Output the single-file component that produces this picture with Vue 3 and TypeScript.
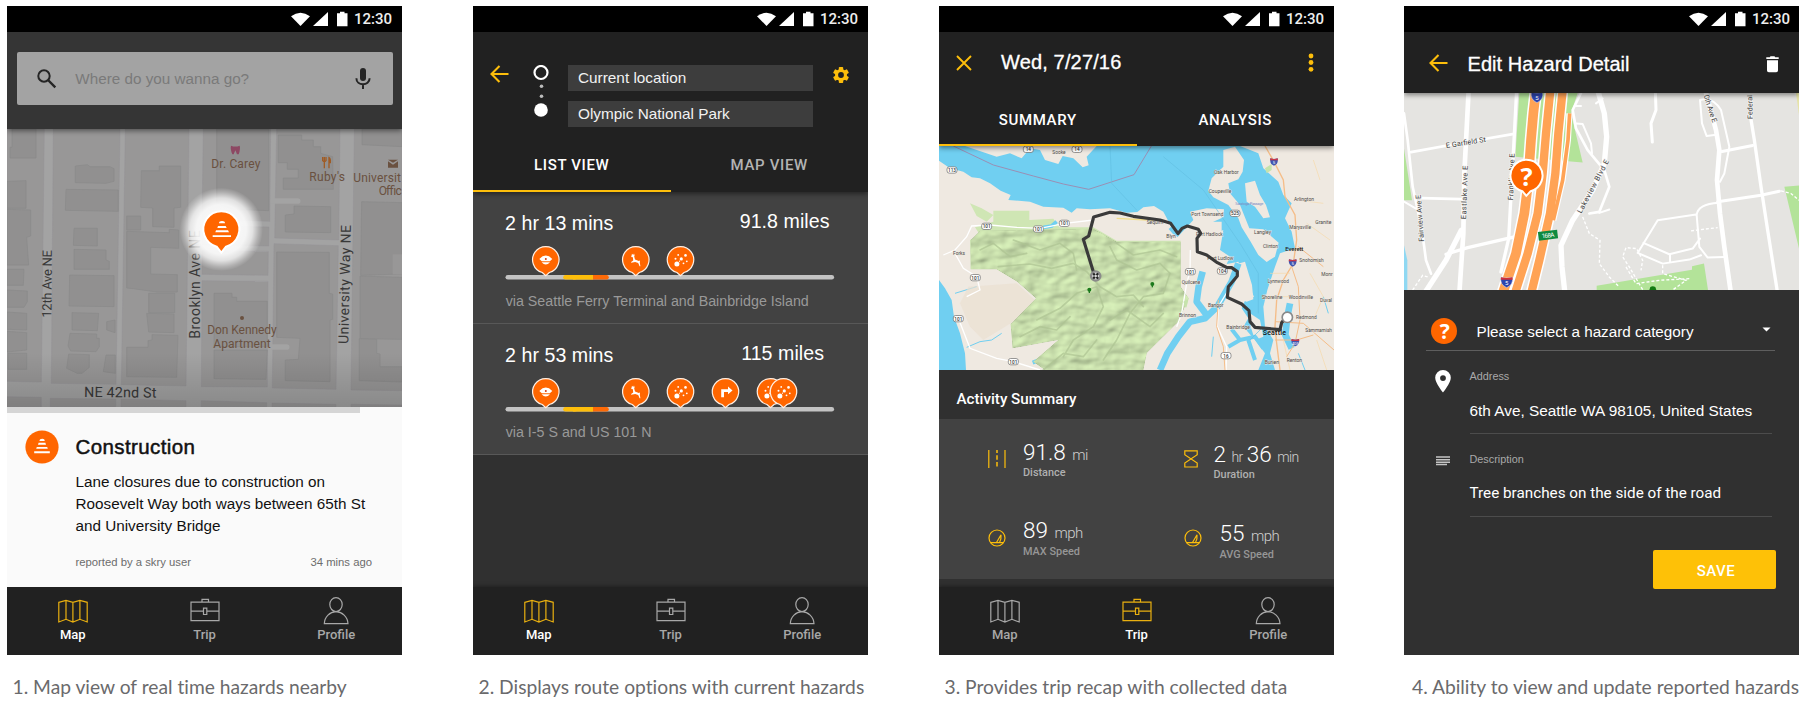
<script setup lang="ts">
type IconName = 'map' | 'trip' | 'profile'
type Hazard = 'police' | 'animal' | 'debris' | 'turn'

interface Screen {
  id: 'hazards' | 'routes' | 'recap' | 'edit'
  caption: string
  active?: IconName
}

interface Label {
  t: string
  x: number
  y: number
  w: number
  s?: number
  r?: number
}

const screens: Screen[] = [
  { id: 'hazards', caption: '1. Map view of real time hazards nearby', active: 'map' },
  { id: 'routes', caption: '2. Displays route options with current hazards', active: 'map' },
  { id: 'recap', caption: '3. Provides trip recap with collected data', active: 'trip' },
  { id: 'edit', caption: '4. Ability to view and update reported hazards' },
]

const navItems: { id: IconName; label: string }[] = [
  { id: 'map', label: 'Map' },
  { id: 'trip', label: 'Trip' },
  { id: 'profile', label: 'Profile' },
]

const routes: { time: string; miles: string; inset: number; via: string; pins: { x: number; kind: Hazard }[] }[] = [
  {
    time: '2 hr 13 mins',
    miles: '91.8 miles',
    inset: 38.5,
    via: 'via Seattle Ferry Terminal and Bainbridge Island',
    pins: [
      { x: 40.8, kind: 'police' },
      { x: 130.8, kind: 'animal' },
      { x: 175.5, kind: 'debris' },
    ],
  },
  {
    time: '2 hr 53 mins',
    miles: '115 miles',
    inset: 44,
    via: 'via I-5 S and US 101 N',
    pins: [
      { x: 40.8, kind: 'police' },
      { x: 130.8, kind: 'animal' },
      { x: 175.5, kind: 'debris' },
      { x: 220.5, kind: 'turn' },
      { x: 265.5, kind: 'debris' },
      { x: 278.5, kind: 'debris' },
    ],
  },
]

const stats: { icon: string; parts: string[]; label: string; cls: string }[] = [
  { icon: 'road', parts: ['91.8', 'mi'], label: 'Distance', cls: 's1' },
  { icon: 'glass', parts: ['2', 'hr', '36', 'min'], label: 'Duration', cls: 's2' },
  { icon: 'gauge', parts: ['89', 'mph'], label: 'MAX Speed', cls: 's3' },
  { icon: 'gauge', parts: ['55', 'mph'], label: 'AVG Speed', cls: 's4' },
]

const blocks: string[] = [
  '21,387 133,387 124,1146 21,1144',
  '160,387 360,387 348,1153 154,1150',
  '376,387 567,387 558,1158 364,1154',
  '610,387 812,387 809,664 606,658',
  '606,678 807,681 806,738 606,735',
  '606,752 805,754 804,826 606,823',
  '606,842 804,844 802,1161 604,1160',
  '830,387 1020,387 1016,720 824,714',
  '822,731 1015,737 1008,1168 817,1164',
  '1063,387 1206,387 1206,1172 1053,1170',
  '21,1190 124,1192 124,1220 21,1220',
  '151,1195 347,1197 347,1220 151,1220',
  '363,1197 558,1202 558,1220 363,1220',
  '604,1202 800,1208 800,1220 604,1220',
  '816,1209 1008,1213 1008,1220 816,1220',
  '1053,1213 1206,1215 1206,1220 1053,1220',
]

const buildings: string[] = [
  '36,387 108,387 108,474 30,474 30,442 36,442',
  '226,498 262,494 270,500 330,500 342,506 342,544 318,550 226,548',
  '198,568 355,570 355,634 196,631',
  '21,544 78,542 78,625 21,625',
  '21,628 92,630 92,708 80,712 86,795 21,795',
  '222,685 292,685 292,738 220,736',
  '222,748 318,750 318,780 328,784 328,808 222,808',
  '209,825 342,827 342,920 207,918',
  '21,808 72,808 70,856 21,856',
  '21,870 82,873 82,905 72,922 21,922',
  '21,936 80,940 80,990 21,988',
  '21,994 80,998 80,1050 21,1056',
  '24,1060 80,1060 80,1108 24,1108',
  '216,938 296,940 292,992 216,990',
  '210,1000 290,1002 290,1015 298,1015 298,1040 288,1055 212,1053 204,1038',
  '206,1062 268,1064 268,1102 246,1120 232,1120 200,1105',
  '320,965 345,960 345,998 320,990',
  '318,1065 346,1065 346,1120 310,1115',
  '424,512 478,512 478,498 542,498 542,622 522,624 522,682 458,680 458,624 422,622',
  '380,648 422,648 422,690 380,690',
  '380,694 508,698 508,688 536,690 536,745 452,742 452,822 532,824 532,876 470,876 400,866 380,864',
  '446,880 524,880 524,938 446,938',
  '440,940 522,942 522,998 446,996',
  '380,1042 444,1042 444,1022 456,1020 456,1004 534,1006 530,1132 380,1130',
  '650,387 806,387 806,632 700,628 650,610',
  '642,880 696,880 696,892 710,892 710,904 802,904 802,1040 642,1040',
  '642,1050 802,1050 798,1138 642,1136',
  '835,405 835,488 862,488 862,508 895,508 895,534 850,534 850,568 1000,568 998,470 962,460 962,440 940,440 940,420 905,420 905,405',
  '882,618 992,620 992,698 856,696 856,645 882,642',
  '830,756 988,757 988,880 998,882 998,958 990,960 990,1145 856,1142 856,1080 895,1078 900,1015 830,1012',
  '1085,605 1206,608 1206,822 1082,826',
  '1080,828 1206,832 1206,1018 1080,1016',
  '1078,1016 1130,1018 1130,1060 1140,1062 1140,1100 1206,1100 1206,1146 1078,1142',
  '1086,387 1206,387 1206,440 1086,434',
]

const poiLabels: Label[] = [
  { t: 'Dr. Carey', x: 634, y: 503, w: 147 },
  { t: "Ruby's", x: 928, y: 543, w: 107 },
  { t: 'Universit', x: 1060, y: 546, w: 143 },
  { t: 'Offic', x: 1136, y: 586, w: 69 },
  { t: 'Don Kennedy', x: 622, y: 1002, w: 208 },
  { t: 'Apartment', x: 640, y: 1044, w: 172 },
]

const streetLabels: Label[] = [
  { t: '12th Ave NE', x: 154, y: 953, w: 203, r: -89.5, s: 39 },
  { t: 'Brooklyn Ave NE', x: 599, y: 1016, w: 325, r: -90, s: 42 },
  { t: 'University Way NE', x: 1045, y: 1032, w: 357, r: -88.8, s: 42 },
  { t: 'NE 42nd St', x: 252, y: 1191, w: 217, r: 0.5, s: 43 },
]

const towns: Label[] = [
  { t: 'Sooke', x: 367, y: 42, w: 40 },
  { t: 'Oak Harbor', x: 852, y: 103, w: 74 },
  { t: 'Coupeville', x: 836, y: 158, w: 68 },
  { t: 'Arlington', x: 1092, y: 184, w: 60 },
  { t: 'Port Townsend', x: 784, y: 228, w: 96 },
  { t: 'Granite', x: 1156, y: 252, w: 48 },
  { t: 'Marysville', x: 1078, y: 266, w: 65 },
  { t: 'Langley', x: 972, y: 282, w: 51 },
  { t: 'Port Hadlock', x: 798, y: 288, w: 80 },
  { t: 'Blyn', x: 709, y: 295, w: 28 },
  { t: 'Sequim', x: 650, y: 252, w: 50 },
  { t: 'Clinton', x: 999, y: 325, w: 45 },
  { t: 'Forks', x: 69, y: 344, w: 36 },
  { t: 'Port Ludlow', x: 832, y: 361, w: 78 },
  { t: 'Snohomish', x: 1108, y: 365, w: 73 },
  { t: 'Monr', x: 1174, y: 408, w: 34 },
  { t: 'Lynnwood', x: 1013, y: 428, w: 64 },
  { t: 'Quilcene', x: 755, y: 431, w: 56 },
  { t: 'Shoreline', x: 995, y: 477, w: 62 },
  { t: 'Woodinville', x: 1076, y: 477, w: 73 },
  { t: 'Duval', x: 1170, y: 485, w: 36 },
  { t: 'Bangor', x: 834, y: 502, w: 46 },
  { t: 'Brinnon', x: 747, y: 530, w: 51 },
  { t: 'Redmond', x: 1098, y: 537, w: 62 },
  { t: 'Bainbridge', x: 889, y: 567, w: 71 },
  { t: 'Sammamish', x: 1126, y: 577, w: 80 },
  { t: 'Burien', x: 1004, y: 672, w: 43 },
  { t: 'Renton', x: 1070, y: 666, w: 46 },
]

const shields: { n: string; x: number; y: number }[] = [
  { n: '14', x: 295, y: 28 },
  { n: '14', x: 441, y: 28 },
  { n: '113', x: 66, y: 90 },
  { n: '101', x: 170, y: 259 },
  { n: '101', x: 325, y: 267 },
  { n: '101', x: 403, y: 250 },
  { n: '101', x: 136, y: 413 },
  { n: '101', x: 85, y: 536 },
  { n: '101', x: 250, y: 665 },
  { n: '101', x: 781, y: 395 },
  { n: '525', x: 915, y: 220 },
  { n: '104', x: 877, y: 393 },
  { n: '16', x: 888, y: 647 },
]

const interstates: { n: string; x: number; y: number }[] = [
  { n: '5', x: 1032, y: 65 },
  { n: '5', x: 1088, y: 368 },
  { n: '405', x: 1096, y: 607 },
]

const avenueLabels: Label[] = [
  { t: 'E Garfield St', x: 151, y: 444, w: 121, r: -9 },
  { t: 'Eastlake Ave E', x: 210, y: 657, w: 160, r: -88 },
  { t: 'Fairview Ave E', x: 84, y: 724, w: 141, r: -94 },
  { t: 'Franklin Ave E', x: 351, y: 600, w: 140, r: -88 },
  { t: 'Lakeview Blvd E', x: 556, y: 641, w: 178, r: -62 },
  { t: '0th Ave E', x: 923, y: 287, w: 86, r: 72 },
  { t: 'Federal', x: 1070, y: 357, w: 72, r: -91 },
]
</script>

<template>
  <main class="board">
    <section v-for="screen in screens" :key="screen.id" class="column" :class="screen.id">
      <div class="phone">
        <div class="status">
          <svg width="60" height="18" viewBox="0 0 60 18">
            <path d="M0 5.2Q9.5-1.8 19 5.2L9.5 15Z" fill="#fff" />
            <path d="M22 15H37V1Z" fill="#fff" />
            <path d="M46 2.3h3V.8h4.500v1.500h3V15.300H46Z" fill="#fff" />
          </svg>
          <span class="clock">12:30</span>
        </div>

        <template v-if="screen.id === 'hazards'">
          <header class="search-head">
            <div class="search">
              <svg width="20" height="20" viewBox="0 0 20 20" fill="none" stroke="#252525">
                <circle cx="7" cy="7" r="5.700" stroke-width="2" />
                <path d="M11 11L18.300 18.300" stroke-width="2.400" />
              </svg>
              <span class="hint">Where do you wanna go?</span>
              <svg width="16" height="21" viewBox="0 0 16 21">
                <rect x="5" y="0" width="6" height="13" rx="3" fill="#252525" />
                <path d="M1.400 10.200C1.400 18.400 14.600 18.400 14.600 10.200M8 16.500V21" fill="none" stroke="#252525" stroke-width="2" />
              </svg>
            </div>
          </header>

          <svg class="map" width="395" height="278" viewBox="21 387 1185 834" preserveAspectRatio="none">
            <defs>
              <radialGradient id="glow">
                <stop offset="0" stop-color="#fff" stop-opacity=".97" />
                <stop offset=".6" stop-color="#fff" stop-opacity=".9" />
                <stop offset=".75" stop-color="#fff" stop-opacity=".72" />
                <stop offset=".9" stop-color="#fff" stop-opacity=".25" />
                <stop offset="1" stop-color="#fff" stop-opacity="0" />
              </radialGradient>
              <linearGradient id="dim" x2="0" y2="1">
                <stop offset="0" stop-color="#000" stop-opacity="0" />
                <stop offset="1" stop-color="#000" stop-opacity=".16" />
              </linearGradient>
            </defs>
            <rect x="21" y="387" width="1185" height="834" fill="#a3a3a3" />
            <polygon v-for="b in blocks" :key="b" :points="b" fill="#989797" stroke="#929195" stroke-width="1.200" />
            <polygon v-for="b in buildings" :key="b" :points="b" fill="#919090" stroke="#8a8989" stroke-width="2" />
            <path d="M820 603H893M815 1041H860" stroke="#a3a3a3" stroke-width="17" stroke-linecap="round" />
            <rect x="1178" y="763" width="28" height="60" fill="#989797" />
            <g fill="#6a5140" font-size="36">
              <text v-for="l in poiLabels" :key="l.t" :x="l.x" :y="l.y" :textLength="l.w">{{ l.t }}</text>
              <circle cx="726" cy="954" r="6" />
              <path d="M1164 479H1194L1179 488ZM1164 484L1179 494L1194 484V503H1164Z" />
            </g>
            <path d="M693 437Q706 442 719 437Q722 446 716 463H711L706 451L701 463H697Q690 446 693 437Z" fill="#8d4863" />
            <path d="M968 471V482Q973 488 978 482V471M973 471V505M987 505V473Q992 476 991 488H987" fill="none" stroke="#a05c25" stroke-width="4" />
            <g fill="#383838">
              <text
                v-for="l in streetLabels"
                :key="l.t"
                :textLength="l.w"
                :font-size="l.s"
                :transform="`translate(${l.x} ${l.y}) rotate(${l.r})`"
              >{{ l.t }}</text>
            </g>
            <rect x="21" y="1060" width="1185" height="161" fill="url(#dim)" />
            <circle cx="664" cy="688" r="125" fill="url(#glow)" />
            <path d="M664 758L650 740A54 54 0 1 1 678 740Z" fill="#ff6600" stroke="#fff" stroke-width="6" />
            <path d="M657 670Q657 663 666 663Q675 663 675 670ZM652 684L654 678H677L680 684ZM646 697L648 691H684L687 697ZM638 711V706H693V711Z" fill="#fff" />
          </svg>

          <article class="report">
            <div class="strip"></div>
            <svg class="badge" width="34" height="34" viewBox="-17 -17 34 34">
              <circle r="16.600" fill="#ff6600" />
              <path d="M-2.500-6Q-2.500-8.300 .3-8.300Q2.800-8.300 2.800-6ZM-4-2.300L-3.400-4.200H3.400L4-2.300ZM-5.800 1.800L-5.200 0H5.200L5.800 1.800ZM-7.800 6.200V4.300H7.800V6.200Z" fill="#fff" />
            </svg>
            <div class="report-text">
              <h2>Construction</h2>
              <p class="l1">Lane closures due to construction on</p>
              <p>Roosevelt Way both ways between 65th St</p>
              <p>and University Bridge</p>
              <footer><span>reported by a skry user</span><span>34 mins ago</span></footer>
            </div>
          </article>
        </template>

        <template v-else-if="screen.id === 'routes'">
          <header class="route-head">
            <div class="trip-fields">
              <svg class="back" width="19" height="18" viewBox="0 0 19 18" fill="none" stroke="#fdbe0b" stroke-width="2.100">
                <path d="M9.500 1L1.500 9L9.500 17M1.500 9H18.500" />
              </svg>
              <svg class="nodes" width="16" height="54" viewBox="0 0 16 54">
                <circle cx="8" cy="7.500" r="6.500" fill="none" stroke="#fff" stroke-width="2.200" />
                <circle cx="8.500" cy="21.300" r="1.800" fill="#bbb" />
                <circle cx="8.500" cy="31.300" r="1.800" fill="#bbb" />
                <circle cx="8" cy="45" r="6.800" fill="#fff" />
              </svg>
              <div class="fields">
                <div>Current location</div>
                <div>Olympic National Park</div>
              </div>
              <svg class="gear" width="18" height="18" viewBox="-9 -9 18 18">
                <g fill="#fdbe0b">
                  <rect v-for="a in [0, 60, 120]" :key="a" x="-2.200" y="-8" width="4.400" height="16" rx=".8" :transform="`rotate(${a})`" />
                  <circle r="6" />
                </g>
                <circle r="2.900" fill="#212121" />
              </svg>
            </div>
            <nav class="tabs"><span class="on">LIST VIEW</span><span class="off">MAP VIEW</span></nav>
          </header>

          <div class="routes-list">
            <article v-for="route in routes" :key="route.via" class="route">
              <div class="route-title">
                <span>{{ route.time }}</span>
                <span class="miles" :style="{ marginRight: route.inset + 'px' }">{{ route.miles }}</span>
              </div>
              <svg class="track" width="330" height="40" viewBox="0 0 330 40">
                <path d="M2.800 33.300H326.800" stroke="#c3c3c3" stroke-width="4.600" stroke-linecap="round" />
                <path d="M86 33.300H101.500" stroke="#fd6a07" stroke-width="4.600" stroke-linecap="round" />
                <path d="M60.500 33.300H70" stroke="#fdbe0b" stroke-width="4.600" stroke-linecap="round" />
                <path d="M68 33.300H88" stroke="#fdbe0b" stroke-width="4.600" />
                <g v-for="pin in route.pins" :key="pin.x" :transform="`translate(${pin.x} 15.700)`">
                  <path d="M0 16L-3.500 12.800A13.200 13.200 0 1 1 3.500 12.800Z" fill="#ff6600" stroke="#fff0e4" stroke-width="1.200" />
                  <g v-if="pin.kind === 'police'">
                    <path d="M-6.500-.8Q0-7.500 6.500-.8L4 1.600H-4ZM-4.200 2.500H4.200Q0 7 -4.200 2.500Z" fill="#fff" />
                    <circle cy="-.8" r="1" fill="#d33a10" />
                  </g>
                  <path
                    v-else-if="pin.kind === 'animal'"
                    d="M-3.800-6L-2.600-4.600L-1.800-6.200L-1.200-4.500L-1.600-3.200L-.8-.3L3 1.200L4.200.8L4 3L4.600 6.500L3.800 6.500L2.400 3.300L-.6 2.200L-4.600 3L-4.700 2.200L-2.600.8L-2.900-2.400L-4.600-2.800Z"
                    fill="#fff"
                  />
                  <g v-else-if="pin.kind === 'debris'" fill="#fff">
                    <circle cx="-3.600" cy="4.300" r="2.500" />
                    <circle cx=".8" cy="-.8" r="1.600" />
                    <circle cx="5" cy="-4.300" r="1.300" />
                    <circle cx="-5" cy="-1" r="1" />
                    <circle cx="-2.300" cy="-4.800" r=".9" />
                    <circle cx="3" cy="3.600" r=".9" />
                    <circle cx="6.300" cy="1.600" r=".9" />
                    <circle cx="-1" cy="1.500" r=".6" />
                  </g>
                  <path v-else d="M-4.300 5.500V-2.500H2.500V-5.200L7-1.200L2.500 2.600V.2H-1.500V5.500Z" fill="#fff" />
                </g>
              </svg>
              <p class="via">{{ route.via }}</p>
            </article>
          </div>
        </template>

        <template v-else-if="screen.id === 'recap'">
          <header class="recap-head">
            <div class="bar">
              <svg width="16" height="16" viewBox="0 0 16 16"><path d="M1 1L15 15M15 1L1 15" stroke="#fdbe0b" stroke-width="1.900" /></svg>
              <h1>Wed, 7/27/16</h1>
              <svg class="dots" width="6" height="20" viewBox="0 0 6 20" fill="#fdbe0b">
                <circle cx="3" cy="3" r="2.400" /><circle cx="3" cy="9.500" r="2.400" /><circle cx="3" cy="16.300" r="2.400" />
              </svg>
            </div>
            <nav class="tabs"><span class="on">SUMMARY</span><span>ANALYSIS</span></nav>
          </header>

          <svg class="map" width="395" height="224" viewBox="27 18 1185 672" preserveAspectRatio="none">
            <defs>
              <filter id="relief" x="0" y="0" width="100%" height="100%" color-interpolation-filters="sRGB">
                <feTurbulence type="fractalNoise" baseFrequency=".02 .03" numOctaves="2" seed="8" result="n" />
                <feDiffuseLighting in="n" surfaceScale="4.500" lighting-color="#fff" result="l">
                  <feDistantLight azimuth="225" elevation="62" />
                </feDiffuseLighting>
                <feComposite in="l" in2="SourceGraphic" operator="arithmetic" k1="1.100" k2="0" k3="0" k4="0" />
                <feComposite in2="SourceGraphic" operator="in" />
              </filter>
            </defs>
            <rect x="27" y="18" width="1185" height="672" fill="#70cff1" />
            <g fill="#efe9e1">
              <path d="M27 62L60 85L100 95L125 112L150 115L180 130L212 152L242 165L235 180L300 185L340 200L400 203L425 218L440 205L480 208L540 205L590 218L622 216L640 202L672 198L700 215L712 238L724 262L742 292L770 262L790 240L780 215L830 205L882 208L880 232L850 245L846 285L880 270L870 330L900 350L890 372L925 365L940 400L925 440L965 455L972 470L945 482L935 505L955 535L940 560L975 600L1005 640L985 690H108L105 640L90 580L72 530L65 480L45 445L27 420Z" />
              <path d="M105 18L200 50L240 40L275 55L300 25L330 30L345 60L385 72L398 48L430 55L458 82L476 76L470 50L500 18Z" />
              <path d="M880 30L915 20L942 60L938 95L925 118L895 130L900 160L930 195L958 265L1000 268L1046 308L1035 350L1010 366L985 345L962 305L935 262L925 235L895 195L850 172L835 152L845 115L880 80Z" />
              <path d="M945 130L975 122L990 165L1008 195L1020 232L1000 235L975 200L950 185Z" />
              <path d="M930 18H1212V690H1035L1020 640L1030 600L1005 560L1000 500L1012 450L1035 380L1050 340L1095 325L1085 275L1065 235L1085 190L1060 165L1045 125L1000 85L985 40Z" />
              <path d="M845 245H875V290L862 310L845 290ZM900 385L920 372L945 365L966 435L970 478L950 485L930 478L905 440Z" />
              <path d="M960 520L990 540L1000 590L975 600L962 560Z" />
            </g>
            <g fill="none" stroke="#70cff1" stroke-linejoin="round">
              <path d="M925 370L905 425L862 500L825 535L780 545L745 590L712 640L690 690" stroke-width="20" />
              <path d="M818 395L806 440L800 485L830 525" stroke-width="20" />
              <path d="M905 568L930 600L975 590L1000 625M930 600L895 620M955 600L975 660" stroke-width="12" />
              <path d="M1080 490L1072 530L1066 585L1085 625" stroke-width="20" />
              <path d="M585 650L615 658L622 690M308 668L340 655" stroke-width="12" />
              <path d="M722 262L742 285" stroke-width="16" />
              <path d="M110 622L150 605L185 600L215 580M75 460L140 440M850 590L845 650M1105 640L1125 690M1180 470L1195 520" stroke-width="3" />
            </g>
            <path d="M190 212H298V240L370 236L388 262L440 262L490 262L560 302H752L752 440L776 475L770 500L745 502L750 545L715 560L690 570L650 640L640 690H345L310 665L385 600L300 605L248 625L242 552L300 520L318 475L262 425L200 388H122L120 300L150 285L135 262L190 245ZM120 190L155 205L190 225L170 245L140 228Z" fill="#cfe6b4" />
            <path d="M115 440L260 430L315 480L250 545L160 600L120 560L90 490Z" fill="#ebdfd2" opacity=".7" />
            <path
              d="M150 272L490 266L560 305H752V440L776 475L745 545L650 640L640 690H345L310 665L385 600L248 625L242 552L318 475L262 425L200 388H122V300Z"
              fill="#cde4b0"
              filter="url(#relief)"
            />
            <path d="M340 262L365 258L380 245" fill="none" stroke="#70cff1" stroke-width="11" />
            <g fill="none" stroke="#aec493" stroke-width="5" stroke-linecap="round" stroke-linejoin="round" opacity=".7">
              <path d="M205 380L300 372L365 385L430 370L470 395L510 440L560 470L610 465L640 500" />
              <path d="M320 540L390 505L440 460L500 440L520 500L490 560L430 600L400 650" />
              <path d="M540 320L560 360L620 390L690 370L720 400L700 460L640 470L600 520L560 600L520 660" />
              <path d="M250 300L330 330L390 310L430 340L440 390M560 310L610 345L690 330L740 350M540 540L590 510L660 560L700 520" />
              <path d="M270 590L330 560L380 570L420 530M340 690L400 640L460 650L500 600M150 330L190 310L240 350L290 340" />
            </g>
            <path d="M70 18L190 75L310 108L400 132L476 148L612 104L664 18" fill="none" stroke="#9a8fb4" stroke-width="3" />
            <path d="M540 18L545 130L620 210M700 50L820 150L930 310L985 400L985 520M960 600L1000 560" fill="none" stroke="#62bfe2" stroke-width="2" />
            <g fill="none" stroke="#fff" stroke-width="4">
              <path d="M40 345L75 330L110 290L125 258L180 255L260 262L330 265L405 250L490 240" />
              <path d="M75 340L100 385L140 410L150 450L110 470M85 535L120 625L200 655L250 665L330 690" />
              <path d="M781 330L780 395L770 430L755 520L740 560M888 690L890 620L862 560L865 500L895 450" />
            </g>
            <path d="M560 235L650 240L700 243" fill="none" stroke="#f2de8c" stroke-width="4" />
            <g fill="none" stroke="#f5bd88" stroke-width="4">
              <path d="M1005 18L1032 65L1060 120L1065 170L1095 225L1100 300L1090 370L1060 420L1040 480L1035 560L1040 610L1050 690" />
              <path d="M1085 380L1105 440L1110 540L1095 610L1070 650M1035 545L1120 550L1212 630M1035 600H1100L1150 585M865 480L860 560L880 620L885 690M1105 320L1180 380" stroke-width="3" />
            </g>
            <g fill="none" stroke="#f6d9a9" stroke-width="2">
              <path d="M1100 180L1180 190M1130 250L1200 300M1140 400L1180 470L1150 540M1160 600L1190 690M1060 600L1080 690M1020 400H1080M1010 470H1100M1150 60L1170 120" />
            </g>
            <path d="M1005 85L1025 72V90L1010 100ZM760 485L775 478L768 505Z" fill="#c6e3ac" />
            <g fill="#1c7a1c"><circle cx="478" cy="449" r="6" /><rect x="476" y="452" width="4" height="7" /><circle cx="667" cy="432" r="6" /><rect x="665" y="435" width="4" height="7" /></g>
            <g fill="#4c4a48" font-size="16.500">
              <text v-for="t in towns" :key="t.t" :x="t.x" :y="t.y" :textLength="t.w" lengthAdjust="spacingAndGlyphs" stroke="#efe9e1" stroke-width="2.500" paint-order="stroke">{{ t.t }}</text>
              <text x="1066" y="332" textLength="54" font-size="18" font-weight="500" fill="#222">Everett</text>
              <text x="998" y="584" textLength="70" font-size="21" font-weight="500" fill="#111">Seattle</text>
              <text x="916" y="196" textLength="84" font-size="12" fill="#7d8bc4">Saratoga Passage</text>
            </g>
            <g v-for="(s, i) in shields" :key="i" :transform="`translate(${s.x} ${s.y})`">
              <rect x="-15" y="-9.500" width="30" height="19" rx="7" fill="#fff" stroke="#666" stroke-width="2" />
              <text text-anchor="middle" y="5.500" font-size="14" font-weight="500" fill="#333">{{ s.n }}</text>
            </g>
            <g v-for="(s, i) in interstates" :key="'i' + i" :transform="`translate(${s.x} ${s.y})`">
              <path d="M-11-10Q0-6 11-10Q14 7 0 12Q-14 7-11-10Z" fill="#4055b0" />
              <path d="M-11-10Q0-6 11-10L12-4H-12Z" fill="#c8384a" />
              <text text-anchor="middle" y="8" font-size="13" fill="#fff">{{ s.n }}</text>
            </g>
            <path
              d="M494 408L460 298L476 288L491 231L540 217L570 219L610 229L690 240L722 250L744 281L756 265L772 258L805 268L812 280L801 295L802 335L830 345L862 368L890 382L905 383L922 395V408L895 440L892 472L935 492L957 512L960 545L975 562L1050 569L1055 548L1065 535"
              fill="none"
              stroke="#3a3a3a"
              stroke-width="9.500"
              stroke-linejoin="round"
            />
            <circle cx="1072" cy="532" r="15.500" fill="#fff" stroke="#8a8a8a" stroke-width="5" />
            <circle cx="497" cy="408" r="14" fill="#d8d8d8" stroke="#8a8a8a" stroke-width="7" />
            <path d="M487 402L492 398L497 403L502 398L507 402L502 408L507 414L502 418L497 413L492 418L487 414L492 408ZM497 403L492 408L497 413L502 408Z" fill="#222" fill-rule="evenodd" />
          </svg>

          <h3 class="summary">Activity Summary</h3>
          <div class="stats">
            <div v-for="s in stats" :key="s.label" class="stat" :class="s.cls">
              <svg v-if="s.icon === 'road'" width="18" height="18" viewBox="0 0 18 18" stroke="#fdbe0b" fill="none">
                <path d="M.800 0V18M17 0V18" stroke-width="1.200" /><path d="M9 0V18" stroke-width="1.500" stroke-dasharray="4.500 2.200" stroke-dashoffset="1.500" />
              </svg>
              <svg v-else-if="s.icon === 'glass'" width="14" height="18" viewBox="0 0 14 18" stroke="#fdbe0b" fill="none" stroke-width="1.200">
                <path d="M.800.800H13.200V4.800L.800 13V17H13.200V13L.800 4.800Z" />
              </svg>
              <svg v-else width="18" height="18" viewBox="-9 -9 18 18" stroke="#fdbe0b" fill="none" stroke-width="1.200">
                <circle r="8" /><path d="M-6.500 4.700H6.500M-.5 4.500L4-3.200M2.500 4.500Q4.500 1 4-3.200" />
              </svg>
              <div>
                <p class="value"><span v-for="(p, i) in s.parts" :key="i" :class="i % 2 ? 'unit' : 'num'">{{ p }}</span></p>
                <p class="name">{{ s.label }}</p>
              </div>
            </div>
          </div>
        </template>

        <template v-else>
          <header class="edit-head">
            <svg width="19" height="18" viewBox="0 0 19 18" fill="none" stroke="#fdbe0b" stroke-width="2.100">
              <path d="M9.500 1L1.500 9L9.500 17M1.500 9H18.500" />
            </svg>
            <h1>Edit Hazard Detail</h1>
            <svg class="trash" width="13" height="17" viewBox="0 0 13 17" fill="#fff">
              <path d="M.300 1.200H3.800L4.500.300H8.500L9.200 1.200H12.700V3H.300ZM1 4.200H12V14.500Q12 16.300 10.200 16.300H2.800Q1 16.300 1 14.500Z" />
            </svg>
          </header>

          <svg class="map" width="395" height="197" viewBox="24 279 1185 590" preserveAspectRatio="none">
            <rect x="24" y="279" width="1185" height="590" fill="#e5e4e1" />
            <g fill="#b3e399">
              <path d="M370 279H545L525 340L560 487L358 470ZM24 445L48 600H24ZM602 856L888 808V798L924 790L936 869H602ZM1165 560L1209 556V745Z" />
            </g>
            <path d="M1200 279H1209V345Z" fill="#e6e3a8" />
            <path d="M24 735L34 780V869H24Z" fill="#8fd8f2" />
            <g fill="none" stroke="#fff" stroke-linejoin="round" stroke-linecap="round">
              <path d="M218 270L205 520L202 700L190 880" stroke-width="14" />
              <path d="M196 690L150 780L85 880" stroke-width="16" />
              <path d="M24 340L35 420L50 560L78 690L90 780L105 820M45 456L200 428L350 402M75 594L195 597" stroke-width="8" />
              <path d="M150 762L215 742L355 710" stroke-width="10" />
              <path d="M362 270L352 460L338 715L315 815" stroke-width="10" />
              <path d="M605 270L625 340L632 410L625 490L590 570L530 660L495 735L498 800L507 880" stroke-width="16" />
              <path d="M555 279L530 330L540 385L575 450L625 510L640 560L610 635L580 640" stroke-width="8" />
              <path d="M540 370L560 372L585 430L588 460M610 638L640 628M600 310L620 295" stroke-width="6" />
              <path d="M540 318H555" stroke-width="6" />
              <path d="M778 270L780 330L765 370L769 426" stroke-width="9" />
              <path d="M930 279L960 390L970 450L963 540L972 640L985 740L1005 880" stroke-width="14" />
              <path d="M1062 340L1075 420L1095 560L1115 690L1145 880" stroke-width="10" />
              <path d="M978 454L1070 436M965 605L1095 585L1150 573" stroke-width="9" />
              <path d="M968 608Q905 612 902 645L910 740L935 772L985 770M900 643L785 660L725 758L800 790L880 778L915 765M742 728L820 762L890 745L912 715M822 762V785" stroke-width="6" />
              <path d="M912 300L918 370L932 408L955 405M912 300Q950 290 975 330L1000 440L985 520L972 545" stroke-width="6" />
              <path d="M24 604L60 625" stroke-width="6" />
            </g>
            <g fill="none" stroke="#fff" stroke-dasharray="9 6" stroke-width="4">
              <path d="M560 650L580 700L612 720L610 790L640 830L668 858" />
              <path d="M740 868L700 800L680 770L690 742L722 745L740 780L735 810M690 800L720 850L790 840L880 835M800 795V820L870 840L830 869" />
              <path d="M885 692L965 682M1155 572L1185 580L1209 600M50 869L80 825L95 830" />
            </g>
            <g fill="none" stroke="#fff">
              <path d="M420 270L412 340L405 420L395 560L385 640L360 760L318 885" stroke-width="38" />
              <path d="M463 270L450 400L440 520L425 640L395 760L355 885" stroke-width="34" />
              <path d="M500 270L487 400L478 520L462 640L430 780L404 885" stroke-width="34" />
              <path d="M520 340L516 420L500 540L472 660" stroke-width="18" />
            </g>
            <g fill="none" stroke="#ffa355">
              <path d="M420 270L412 340L405 420L395 560L385 640L360 760L318 885" stroke-width="29" />
              <path d="M463 270L450 400L440 520L425 640L395 760L355 885" stroke-width="25" />
              <path d="M500 270L487 400L478 520L462 640L430 780L404 885" stroke-width="25" />
              <path d="M521 340L516 420L500 540L472 660" stroke-width="11" />
            </g>
            <g transform="translate(456 705) rotate(-7)">
              <rect x="-29" y="-13" width="58" height="26" fill="#108a3f" />
              <text text-anchor="middle" y="7" font-size="19" textLength="38" fill="#fff">168A</text>
            </g>
            <g v-for="y in [291, 845]" :key="y" :transform="`translate(${y === 291 ? 423 : 332} ${y})`">
              <path d="M-17-14Q0-10 17-14Q21 8 0 17Q-21 8-17-14Z" fill="#2d44ae" stroke="#e8e8f4" stroke-width="1.500" />
              <path v-if="y === 845" d="M-17-14Q0-10 17-14L18-7H-18Z" fill="#d2303a" />
              <text text-anchor="middle" y="9" font-size="18" fill="#fff">5</text>
            </g>
            <path d="M760 869L763 860Q770 855 778 860L781 869Z" fill="#127a12" />
            <g fill="#3e3e3e" font-size="22">
              <text
                v-for="l in avenueLabels"
                :key="l.t"
                :textLength="l.w"
                :transform="`translate(${l.x} ${l.y}) rotate(${l.r})`"
                stroke="#f3f2f0"
                stroke-width="4"
                paint-order="stroke"
              >{{ l.t }}</text>
            </g>
            <path d="M391 587L379 573A48 48 0 1 1 404 573Z" fill="#ff6600" stroke="#fff" stroke-width="6" />
            <text class="ask" x="392" y="558" text-anchor="middle" font-size="76">?</text>
          </svg>

          <form class="form" @submit.prevent>
            <div class="category">
              <svg width="26" height="26" viewBox="0 0 26 26">
                <circle cx="13" cy="13" r="13" fill="#ff6600" />
                <text class="ask" x="13.700" y="20.700" text-anchor="middle" font-size="21">?</text>
              </svg>
              <span>Please select a hazard category</span>
              <svg class="caret" width="9" height="5" viewBox="0 0 9 5"><path d="M.500.500H8.500L4.500 4.500Z" fill="#fff" /></svg>
            </div>
            <div class="field">
              <svg width="16" height="23" viewBox="0 0 16 23"><path d="M8 0A7.800 7.800 0 0 1 15.800 7.800C15.800 13 8 22.500 8 22.500S.200 13 .200 7.800A7.800 7.800 0 0 1 8 0ZM8 5.200A2.900 2.900 0 1 0 8 11A2.900 2.900 0 1 0 8 5.200Z" fill="#fff" fill-rule="evenodd" /></svg>
              <div class="entry">
                <label>Address</label>
                <p class="addr">6th Ave, Seattle WA 98105, United States</p>
              </div>
            </div>
            <div class="field second">
              <svg width="16" height="10" viewBox="0 0 16 10" stroke="#c4c4c4" stroke-width="1.500"><path d="M1 1H15M1 3.700H15M1 6.200H15M1 8.500H12" /></svg>
              <div class="entry">
                <label>Description</label>
                <p class="desc">Tree branches on the side of the road</p>
              </div>
            </div>
            <button type="button">SAVE</button>
          </form>
        </template>

        <nav v-if="screen.active" class="bottom">
          <div v-for="item in navItems" :key="item.id" class="tab" :class="{ active: item.id === screen.active }">
            <svg width="30" height="28" viewBox="0 0 30 28" fill="none" stroke="currentColor" stroke-width="1.200">
              <path v-if="item.id === 'map'" d="M.800 5.300L8 3.300L14.900 5.300L21.900 3.300L29.200 5.300V25L21.900 22.300L14.900 25L8 22.300L.800 25ZM8 3.300V22.300M14.900 5.300V25M21.900 3.300V22.300" />
              <path v-else-if="item.id === 'trip'" d="M1 5.200H29V23.700H1ZM12 5.200V2.300H18.500V5.200M1 14.200H13.500M16.800 14.200H29M13.500 11.200H16.800V17.500H13.500Z" />
              <g v-else>
                <ellipse cx="15" cy="7.600" rx="6.200" ry="6.900" />
                <path d="M3.300 26.700C3.500 19.500 9 14.900 15 14.700C21 14.900 26.700 19.500 27 26.700Z" />
              </g>
            </svg>
            <span>{{ item.label }}</span>
          </div>
        </nav>
      </div>
      <p class="caption">{{ screen.caption }}</p>
    </section>
  </main>
</template>

<style>
body { background: #fff; }
</style>

<style scoped>
.board {
  display: grid;
  grid-template-columns: 395px 395px 395px 395px;
  column-gap: 71px;
  width: 1806px;
  height: 704px;
  padding: 6px 0 0 7px;
  box-sizing: border-box;
  overflow: hidden;
  font-family: 'Liberation Sans', Arial, sans-serif;
}
.edit { margin-left: -1px; }
h1, h2, h3, p { margin: 0; font-weight: 400; }
.phone {
  display: flex;
  flex-direction: column;
  width: 395px;
  height: 649px;
  background: #303030;
  color: #fff;
  overflow: hidden;
}
svg { display: block; flex: none; }
.status {
  display: flex;
  flex: none;
  justify-content: flex-end;
  height: 26px;
  padding: 5px 10px 0 0;
  box-sizing: border-box;
  background: #000;
}
.edit .status { padding-right: 9px; }
.status svg { margin-right: 3px; }
.clock { font: 500 15px/16px Roboto, sans-serif; color: #eee; }
header {
  position: relative;
  flex: none;
  background: #212121;
  box-shadow: 0 2px 5px rgba(0, 0, 0, .45);
}
.map { font-family: Roboto, sans-serif; }

/* hazards */
.search-head { height: 97px; padding: 20px 9px 0 9.500px; box-sizing: border-box; background: #353535; }
.search {
  display: flex;
  align-items: center;
  height: 53px;
  padding: 0 22.500px 0 20.500px;
  border-radius: 2px;
  background: #a3a3a3;
}
.hint { flex: 1; margin-left: 18.300px; font-size: 15.250px; color: #7a7a7a; }
.report {
  display: flex;
  flex-wrap: wrap;
  align-items: flex-start;
  align-content: flex-start;
  height: 180px;
  background: #fafafa;
  color: #111;
}
.strip { width: 353px; height: 6px; margin-right: 42px; background: #d5d5d5; }
.badge { margin: 17px 17px 0 17.500px; }
.report-text { flex: 1; padding: 20.500px 30px 0 0; }
.report h2 { font-size: 20.500px; line-height: 26px; letter-spacing: .4px; -webkit-text-stroke: .5px #111; }
.report p { font-size: 15.270px; line-height: 22px; white-space: nowrap; }
.report .l1 { margin-top: 11.500px; }
.report footer {
  display: flex;
  justify-content: space-between;
  margin-top: 17.500px;
  font-size: 11.300px;
  line-height: 14px;
  color: #6c6c6c;
}

/* tabs */
.tabs { display: flex; height: 48px; font: 500 15px/44px Roboto, sans-serif; letter-spacing: .65px; text-align: center; }
.tabs span { flex: 1; height: 48px; box-sizing: border-box; }
.tabs .on { border-bottom: 2px solid #fdbe0b; }
.tabs .off { color: #b3b3b3; }

/* routes */
.route-head { height: 160px; }
.route-head .tabs { line-height: 43px; }
.route-head .off { line-height: 42px; }
.trip-fields { display: flex; height: 112px; padding: 33px 0 0 17px; box-sizing: border-box; }
.nodes { margin-left: 23.500px; }
.fields { width: 245px; margin-left: 19.500px; }
.fields div {
  height: 26px;
  margin-bottom: 10px;
  padding-left: 10px;
  box-sizing: border-box;
  background: #3d3d3d;
  color: #f2f2f2;
  font-size: 15.350px;
  line-height: 26px;
}
.gear { margin: 1px 0 0 18.500px; }
.route {
  height: 131.500px;
  padding: 19px 0 0 32px;
  box-sizing: border-box;
  border-bottom: 1.500px solid #585858;
  background: #424242;
}
.route-title { display: flex; justify-content: space-between; font-size: 19.600px; line-height: 24px; letter-spacing: .05px; }
.miles { position: relative; top: -2px; }
.track { margin-top: 9px; }
.via { margin: 7.500px 0 0 .700px; font-size: 14.260px; line-height: 18px; color: #999; }

/* recap */
.bar { display: flex; align-items: center; height: 66px; padding: 0 20px 5px 17px; box-sizing: border-box; }
.bar h1 { flex: 1; margin-left: 29px; font-size: 20px; letter-spacing: .15px; -webkit-text-stroke: .3px #fff; }
.summary { height: 48.500px; padding: 19px 0 0 17.500px; box-sizing: border-box; font: 500 15.200px/20px Roboto, sans-serif; }
.stats { display: grid; grid-template-columns: 196.500px 1fr; grid-auto-rows: 79.500px; height: 160px; background: #424242; }
.stat { display: flex; padding: 20px 0 0 48.500px; }
.stat svg { margin-top: 11px; }
.stat > div { margin-left: 17.500px; }
.value { display: flex; align-items: baseline; height: 26px; font: 300 22.500px/26px Roboto, sans-serif; }
.num { margin-right: 6.500px; }
.unit { font-size: 15px; letter-spacing: -.6px; color: #d0d0d0; }
.name { margin-top: 1px; font: 500 10.900px/14px Roboto, sans-serif; color: #b0b0b0; }
.s2 svg { margin-top: 11px; }
.s2 > div { margin: 2px 0 0 15.500px; }
.s2 .num { margin-right: 5.500px; }
.s2 .unit { margin-right: 4px; font-size: 14px; }
.s3 { padding-top: 19px; }
.s4 { padding-top: 19px; }
.s3 svg, .s4 svg { margin-top: 12px; }
.s3 .name, .s4 .name { margin-top: 2px; color: #979797; }
.s4 > div { margin-top: 2.500px; }

/* edit */
.edit-head { display: flex; align-items: center; height: 61px; padding: 0 20.500px 0 25px; box-sizing: border-box; }
.edit-head h1 { flex: 1; margin: 4px 0 0 19.500px; font-size: 20px; letter-spacing: .05px; -webkit-text-stroke: .3px #fff; }
.trash { margin-top: 3px; }
.ask { font-family: 'Open Sans', sans-serif; font-weight: 700; fill: #fff; }
.form { display: flex; flex-direction: column; }
.category {
  display: flex;
  height: 61px;
  margin: 0 24px 0 22px;
  padding: 27.500px 4.500px 0 5px;
  box-sizing: border-box;
  border-bottom: 1.500px solid #5e5e5e;
  font-size: 15.250px;
}
.category span { flex: 1; margin-left: 19.500px; line-height: 28px; }
.category .caret { margin-top: 9px; }
.field { display: flex; padding: 18px 27px 0 31px; }
.field svg { margin-top: .500px; }
.field.second svg { margin-top: 4px; }
.entry { flex: 1; margin-left: 18.500px; border-bottom: 1.500px solid #4c4c4c; }
.entry label { display: block; font-size: 10.850px; line-height: 14px; color: #a9a9a9; }
.entry p { margin-top: 17.700px; height: 32px; line-height: 20px; white-space: nowrap; }
.entry .addr { font-size: 15.360px; }
.entry .desc { height: 33px; font: 400 15.250px/20px Roboto, sans-serif; }
button {
  width: 123px;
  height: 39px;
  margin: 33px 0 0 249px;
  padding: 2px 0 0 3px;
  border: 0;
  border-radius: 2px;
  background: #fec107;
  color: #fff;
  font: 500 15px/20px Roboto, sans-serif;
  letter-spacing: .5px;
}

/* bottom navigation */
.bottom {
  position: relative;
  display: flex;
  height: 68px;
  margin-top: auto;
  flex: none;
  background: #212121;
  box-shadow: 0 -1px 4px rgba(0, 0, 0, .35);
}
.hazards .bottom { box-shadow: none; }
.tab { display: flex; flex: 1; flex-direction: column; align-items: center; padding-top: 10px; color: #a8a8a8; font: 500 13px/16px Roboto, sans-serif; }
.tab svg { margin-bottom: 2px; }
.tab.active svg { color: #e9b010; }
.tab.active { color: #fff; }

.caption {
  margin: 20px 0 0 5.500px;
  font: 400 19.230px/24px Lato, sans-serif;
  font-variant-ligatures: none;
  color: #6a6a6c;
  white-space: nowrap;
}
.edit .caption { margin-left: 8px; }
</style>
